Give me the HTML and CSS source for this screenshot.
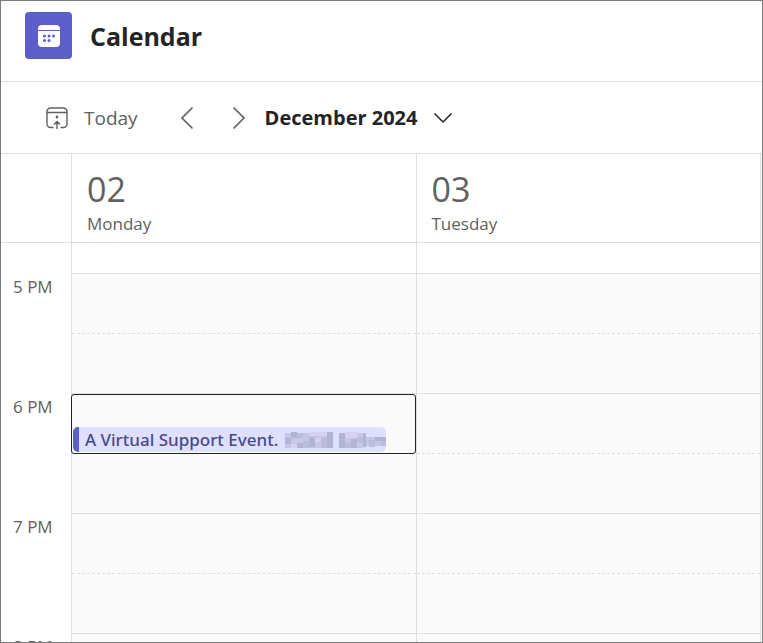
FILE: index.html
```html
<!DOCTYPE html>
<html lang="en">
<head>
    <meta charset="UTF-8">
    <meta name="viewport" content="width=device-width, initial-scale=1.0">
    <title>Calendar</title>
    <link rel="stylesheet" href="styles.css">
</head>
<body>
    <div class="app">
        <header class="header">
            <span class="logo">
                <svg width="22" height="22" viewBox="0 0 22 22" aria-hidden="true">
                    <path fill="#fff" d="M0 5V4a4 4 0 0 1 4-4h14a4 4 0 0 1 4 4v1z"/>
                    <path fill="#fff" d="M0 6h22v12a4 4 0 0 1-4 4H4a4 4 0 0 1-4-4z"/>
                    <g fill="#5b5fc7">
                        <circle cx="6.5" cy="11" r="1.5"/>
                        <circle cx="11" cy="11" r="1.5"/>
                        <circle cx="15.5" cy="11" r="1.5"/>
                        <circle cx="6.5" cy="15.5" r="1.5"/>
                        <circle cx="11" cy="15.5" r="1.5"/>
                    </g>
                </svg>
            </span>
            <h1 class="title">Calendar</h1>
        </header>

        <nav class="toolbar">
            <button class="btn today" type="button">
                <svg width="22" height="22" viewBox="0 0 22 22" fill="none" stroke="#616161" stroke-width="1.4" aria-hidden="true">
                    <path d="M7.5 20.5h-3A3.5 3.5 0 0 1 1 17V4.5A3.5 3.5 0 0 1 4.5 1h13A3.5 3.5 0 0 1 21 4.5V17a3.5 3.5 0 0 1-3.5 3.5h-3M1 5.500h20M11 22v-7M8 17.500l3-3 3 3"/>
                    <circle cx="11" cy="10" r="1.4" fill="#616161" stroke="none"/>
                </svg>
                Today
            </button>
            <button class="btn arrow" type="button" aria-label="Previous">
                <svg width="14" height="24" viewBox="0 0 14 24" fill="none" stroke="#616161" stroke-width="1.7" aria-hidden="true">
                    <path d="M12.5 1.5L2 12l10.5 10.5"/>
                </svg>
            </button>
            <button class="btn arrow" type="button" aria-label="Next">
                <svg width="14" height="24" viewBox="0 0 14 24" fill="none" stroke="#616161" stroke-width="1.7" aria-hidden="true">
                    <path d="M1.5 1.5L12 12 1.5 22.5"/>
                </svg>
            </button>
            <button class="btn month" type="button">
                December 2024
                <svg width="20" height="12" viewBox="0 0 20 12" fill="none" stroke="#242424" stroke-width="1.5" aria-hidden="true">
                    <path d="M1.5 1.5L10 10l8.5-8.5"/>
                </svg>
            </button>
        </nav>

        <table class="grid">
            <thead>
                <tr>
                    <td class="time"></td>
                    <th class="day" scope="col"><span class="num">02</span><span class="name">Monday</span></th>
                    <th class="day" scope="col"><span class="num">03</span><span class="name">Tuesday</span></th>
                </tr>
            </thead>
            <tbody>
                <tr class="lead">
                    <td class="time"></td>
                    <td></td>
                    <td></td>
                </tr>
                <tr class="hour">
                    <th class="time" scope="row">5 PM</th>
                    <td><div class="half"></div></td>
                    <td><div class="half"></div></td>
                </tr>
                <tr class="hour">
                    <th class="time" scope="row">6 PM</th>
                    <td>
                        <div class="half selected">
                            <button class="event" type="button">
                                A Virtual Support Event.
                                <!-- organizer name, pixelated -->
                                <svg class="masked" width="101" height="18" viewBox="0 0 101 18" aria-hidden="true">
                                    <path fill="#c6c6e6" d="M0 2h48v15H0zM54 2h24v15H54zM78 6h23v9H78z"/>
                                    <path fill="#b3b3d6" d="M6 1h6v6H6zM0 7h6v6H0zM12 12h6v5h-6zM24 6h6v10h-6zM42 1h6v16h-6zM54 2h6v15h-6zM66 8h6v9h-6zM78 2h3v14h-3zM90 6h11v4H90z"/>
                                    <path fill="#bcbcde" d="M12 2h6v5h-6zM18 10h6v7h-6zM36 6h6v11h-6zM60 12h6v5h-6zM72 6h6v5h-6zM84 9h6v7h-6zM96 10h5v5h-5z"/>
                                    <path fill="#d3d3f1" d="M24 1h18v4H24zM60 1h12v6H60zM6 13h6v4H6zM30 7h6v4h-6z"/>
                                </svg>
                            </button>
                        </div>
                    </td>
                    <td><div class="half"></div></td>
                </tr>
                <tr class="hour">
                    <th class="time" scope="row">7 PM</th>
                    <td><div class="half"></div></td>
                    <td><div class="half"></div></td>
                </tr>
                <tr class="hour">
                    <th class="time" scope="row">8 PM</th>
                    <td><div class="half"></div></td>
                    <td><div class="half"></div></td>
                </tr>
            </tbody>
        </table>
    </div>
</body>
</html>
```

FILE: styles.css
```css
*{
    margin: 0;
    padding: 0;
    box-sizing: border-box;
}
body{
    font-family: "Open Sans", "Noto Sans", sans-serif;
    color: #242424;
    background-color: #fff;
}
.app{
    height: 100vh;
    border: 1px solid #7c7c7c;
    overflow: hidden;
}

/* header */
.header{
    display: flex;
    align-items: center;
    gap: 18px;
    padding: 11px 24px 22px;
    border-bottom: 1px solid #dedede;
}
.logo{
    display: flex;
    align-items: center;
    justify-content: center;
    width: 47px;
    height: 47px;
    border-radius: 4px;
    background-color: #5b5fc7;
}
.title{
    font-size: 25px;
    line-height: 32px;
    font-weight: 700;
}

/* toolbar */
.toolbar{
    display: flex;
    align-items: center;
    padding: 18px 45px;
    border-bottom: 1px solid #dedede;
}
.btn{
    display: flex;
    align-items: center;
    height: 35px;
    border: none;
    background: none;
    font-family: inherit;
    font-size: 20px;
    color: #616161;
    cursor: pointer;
}
.today{
    gap: 16px;
    margin-right: 42px;
    font-size: 19px;
}
.arrow{
    margin-right: 38px;
}
.month{
    gap: 16px;
    margin-left: -19px;
    font-weight: 700;
    color: #242424;
}

/* calendar grid */
.grid{
    width: calc(100% - 1px);
    table-layout: fixed;
    border-collapse: separate;
    border-spacing: 0;
}
.grid th,
.grid td{
    border-right: 1px solid #dedede;
    border-bottom: 1px solid #dedede;
    vertical-align: top;
    text-align: left;
    font-weight: 400;
    color: #616161;
}
.grid .time{
    width: 71px;
    padding-left: 12px;
    font-size: 17px;
    line-height: 26px;
}
.grid .day{
    height: 89px;
    padding: 14px 15px 0;
}
.num,
.name{
    display: block;
}
.num{
    font-size: 34px;
    line-height: 42px;
}
.name{
    font-size: 17px;
    line-height: 28px;
}
.lead td{
    height: 31px;
}
.hour td{
    height: 120px;
    background-color: #fafafa;
}
.grid tbody .time{
    border-bottom: none;
    background-color: #fff;
}
.half{
    height: 60px;
    border-bottom: 1px dashed #dedede;
}

/* event */
.selected{
    display: flex;
    align-items: flex-end;
    margin-left: -1px;
    border: 1px solid #242424;
    border-radius: 3px;
}
.event{
    display: flex;
    align-items: center;
    gap: 7px;
    height: 25px;
    margin: 0 1px 1px;
    padding-left: 6px;
    border: none;
    border-left: 6px solid #5b5fc7;
    border-radius: 5px;
    background-color: #dfdfff;
    font-family: "Noto Sans", "Open Sans", sans-serif;
    font-size: 17px;
    font-weight: 500;
    color: #494b85;
    white-space: nowrap;
    cursor: pointer;
}
```
